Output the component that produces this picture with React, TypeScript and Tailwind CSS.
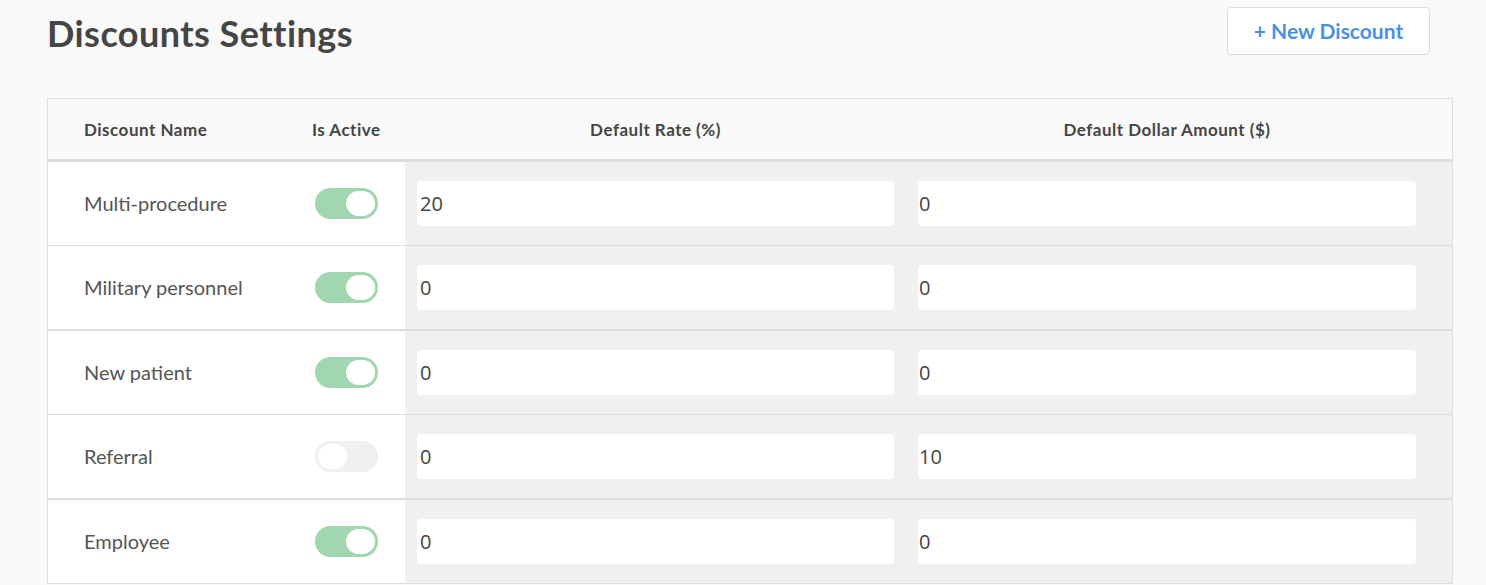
import React from "react";

const rows = [
  { name: "Multi-procedure", active: true, rate: "20", dollar: "0", thick: false },
  { name: "Military personnel", active: true, rate: "0", dollar: "0", thick: true },
  { name: "New patient", active: true, rate: "0", dollar: "0", thick: false },
  { name: "Referral", active: false, rate: "0", dollar: "10", thick: true },
  { name: "Employee", active: true, rate: "0", dollar: "0", thick: false },
];

function Toggle({ on }: { on: boolean }) {
  return on ? (
    <div className="flex h-[31px] w-[63px] items-center justify-end rounded-full bg-[#a1d7b0] pr-[3px]">
      <div className="h-[25px] w-[29px] rounded-full bg-white" />
    </div>
  ) : (
    <div className="flex h-[31px] w-[63px] items-center justify-start rounded-full bg-[#f0f0f0] pl-[3px]">
      <div className="h-[25px] w-[29px] rounded-full bg-white" />
    </div>
  );
}

export default function App() {
  return (
    <div className="min-h-[585px] bg-[#f9f9f9] pl-[47px] pr-[33px] text-[#474747]" style={{ fontFamily: "Lato, 'Open Sans', sans-serif" }}>
      <div className="flex h-[54px] items-start justify-between pt-[7px] pr-[23px]">
        <h1 className="mt-[6px] text-[36px] font-bold leading-[40px] tracking-[0.45px] text-[#454545]">Discounts Settings</h1>
        <button className="h-[48px] w-[203px] rounded-[4px] border border-[#dcdcdc] bg-white text-[21px] font-bold text-[#4a90e2]">
          + New Discount
        </button>
      </div>
      <div className="mt-[44px] border border-[#dddddd] bg-white">
        <div className="flex h-[63px] items-center border-b-[3px] border-[#dddddd] bg-[#f9f9f9] pt-[1px] text-[17px] font-bold tracking-[0.5px] text-[#454545]">
          <div className="w-[252px] pl-[36px]">Discount Name</div>
          <div className="w-[105px] pl-[12px]">Is Active</div>
          <div className="w-[501px] text-center">Default Rate (%)</div>
          <div className="w-[522px] text-center">Default Dollar Amount ($)</div>
          <div className="flex-1" />
        </div>
        {rows.map((r, i) => (
          <div
            key={r.name}
            className={
              "box-content flex h-[83px] items-stretch " +
              (i === 0 ? "" : r.thick ? "border-t-[1px] border-[#dddddd]" : "border-t-[2px] border-[#dddddd]")
            }
          >
            <div className="flex w-[252px] items-center pb-[2px] pl-[36px] text-[20px] text-[#555555]">{r.name}</div>
            <div className="flex w-[105px] items-center pl-[15px]">
              <Toggle on={r.active} />
            </div>
            <div className="flex flex-1 items-center bg-[#f0f0f0]">
              <div className="w-[501px] px-[12px]">
                <div className="flex h-[45px] items-center rounded-[4px] bg-white pl-[3px] text-[20px] text-[#444444]" style={{ fontFamily: "'Open Sans', sans-serif" }}>
                  {r.rate}
                </div>
              </div>
              <div className="w-[522px] px-[12px]">
                <div className="flex h-[45px] items-center rounded-[4px] bg-white pl-[1px] text-[20px] text-[#444444]" style={{ fontFamily: "'Open Sans', sans-serif" }}>
                  {r.dollar}
                </div>
              </div>
            </div>
          </div>
        ))}
      </div>
    </div>
  );
}
